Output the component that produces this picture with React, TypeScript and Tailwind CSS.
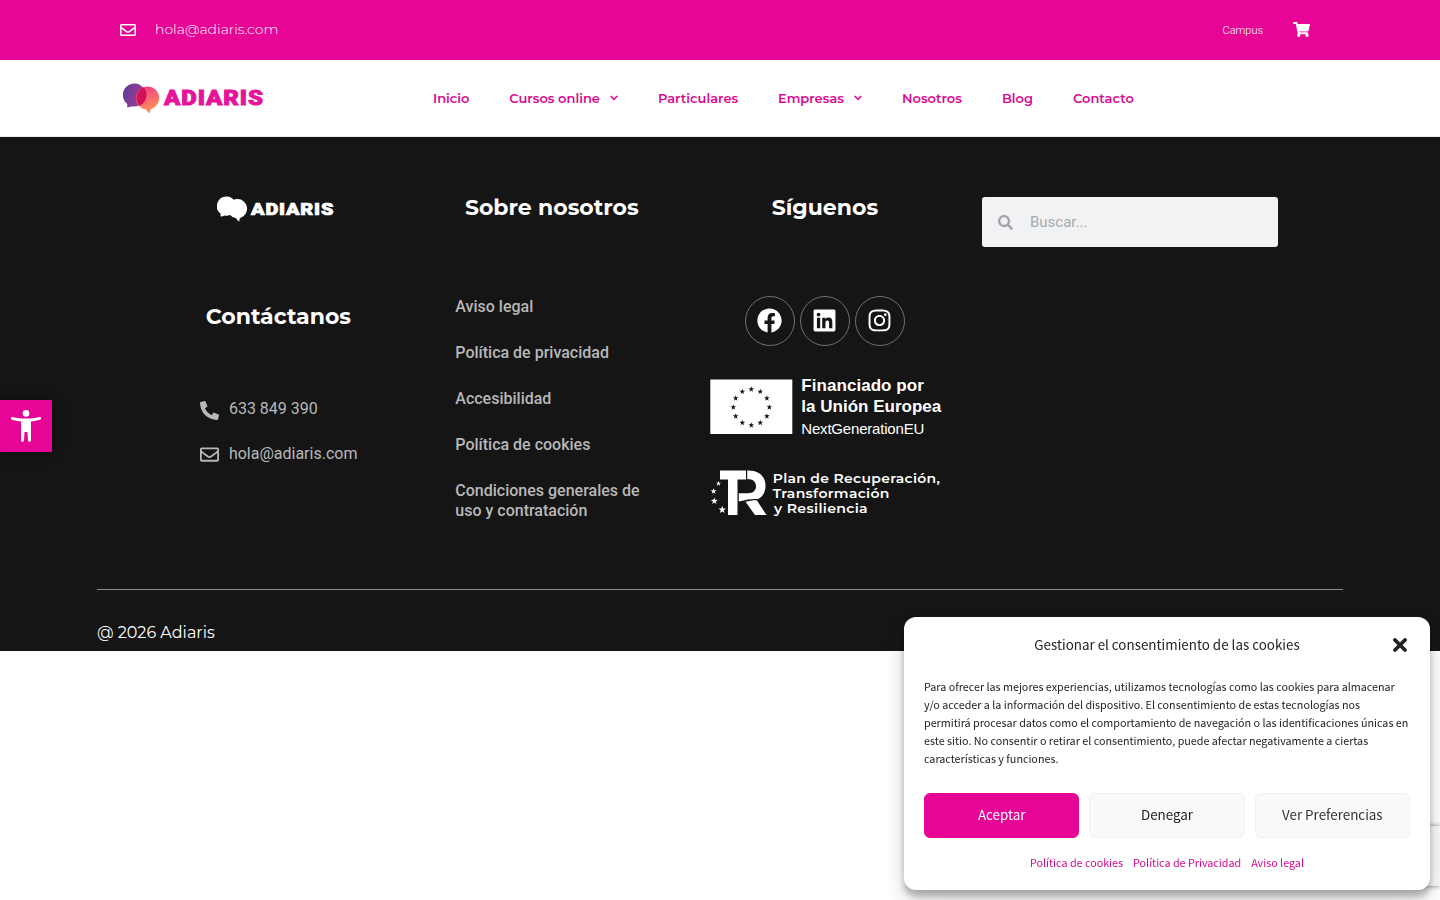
import { FaFacebook, FaInstagram, FaLinkedin, FaPhoneAlt, FaRegEnvelope, FaSearch, FaShoppingCart } from "react-icons/fa";

const NAV = [
  { label: "Inicio", width: "w-[36.3px]" },
  { label: "Cursos online", width: "w-[108.7px]", menu: true },
  { label: "Particulares", width: "w-[80px]" },
  { label: "Empresas", width: "w-[84px]", menu: true },
  { label: "Nosotros", width: "w-[60px]" },
  { label: "Blog", width: "w-[31px]" },
  { label: "Contacto", width: "w-[61px]" },
];

const LEGAL = [
  "Aviso legal",
  "Política de privacidad",
  "Accesibilidad",
  "Política de cookies",
  "Condiciones generales de uso y contratación",
];

const SOCIAL = [FaFacebook, FaLinkedin, FaInstagram];

function starPoints(cx: number, cy: number, r: number) {
  return Array.from({ length: 10 }, (_, i) => {
    const a = (Math.PI / 5) * i - Math.PI / 2;
    const d = i % 2 ? r * 0.4 : r;
    return `${(cx + d * Math.cos(a)).toFixed(2)},${(cy + d * Math.sin(a)).toFixed(2)}`;
  }).join(" ");
}

function Logo({ mono = false, className }: { mono?: boolean; className: string }) {
  return (
    <svg viewBox="0 0 142 32" className={className} role="img" aria-label="Adiaris">
      <defs>
        <linearGradient id="bubbleLeft" x1="0" y1="0" x2="1" y2="0.3">
          <stop offset="0" stopColor="#5b3f99" />
          <stop offset="1" stopColor="#a63a94" />
        </linearGradient>
        <linearGradient id="bubbleRight" x1="0.3" y1="0" x2="0.6" y2="1">
          <stop offset="0" stopColor="#ee3d8b" />
          <stop offset="1" stopColor="#ff9950" />
        </linearGradient>
        <clipPath id="overlap">
          <circle cx="12" cy="12" r="11.5" />
        </clipPath>
      </defs>
      <path
        d="M12 .5a11.5 11.5 0 1 1-3.2 22.7c-1.4 1-3.3 1.4-5 1 .6-.9.8-2.1.3-3.3A11.5 11.5 0 0 1 12 .5Z"
        fill={mono ? "#fff" : "url(#bubbleLeft)"}
      />
      <path
        d="M25 3.5a11.5 11.5 0 0 1 4 22.2c-1.5.6-2.3 1.8-2 4.8-1.5-1-3.4-2.2-4-4.1A11.5 11.5 0 0 1 25 3.5Z"
        fill={mono ? "#fff" : "url(#bubbleRight)"}
      />
      {!mono && <circle cx="25" cy="15" r="11.5" fill="#d0125c" clipPath="url(#overlap)" />}
      <text
        x="41"
        y="22.3"
        textLength="100"
        lengthAdjust="spacingAndGlyphs"
        className="font-['Roboto',sans-serif] text-[19.5px] font-black tracking-[0.8px]"
        fill={mono ? "#fff" : "#e5149a"}
        stroke={mono ? "#fff" : "#e5149a"}
        strokeWidth="0.9"
      >
        ADIARIS
      </text>
    </svg>
  );
}

function EuFunding() {
  return (
    <svg viewBox="0 0 236 56" className="h-[56px] w-[236px] overflow-visible">
      <rect x="0.3" y="0.5" width="82" height="54.5" fill="#fff" />
      {Array.from({ length: 12 }, (_, i) => {
        const a = (Math.PI / 6) * i;
        return (
          <polygon key={i} fill="#151515" points={starPoints(41.3 + 18 * Math.sin(a), 28.2 - 18 * Math.cos(a), 3)} />
        );
      })}
      <g fill="#fff" className="font-['Liberation_Sans',Arial,sans-serif]">
        <text x="91.3" y="12.4" textLength="122.5" className="text-[17px] font-bold">Financiado por</text>
        <text x="91.3" y="32.8" textLength="140" className="text-[17px] font-bold">la Unión Europea</text>
        <text x="91.3" y="55" textLength="123" className="text-[15px]">NextGenerationEU</text>
      </g>
    </svg>
  );
}

function RecoveryPlan() {
  return (
    <svg viewBox="0 0 236 48" className="h-[48px] w-[236px] overflow-visible">
      <g fill="#fff">
        <path d="M10 1.5h26v9h-8.5V46H18V10.5h-8Z" />
        <path d="M37.2 1.5h1.3c10.5 0 17 6 17 15.2 0 6.4-2.7 11-7.4 13.4-5-.6-10.5.1-19.3 2.3v-8.2h9.2c5.2 0 8-2.8 8-7 0-4.4-3-7.2-8.8-7.2Z" />
        <path d="M35.5 32.8c3.5-1 7.5-1.6 11.3-1.5L56.5 46H45Z" />
        <polygon points={starPoints(8.5, 14.5, 2.7)} />
        <polygon points={starPoints(3.6, 22.3, 3.1)} />
        <polygon points={starPoints(4.3, 32, 3.6)} />
        <polygon points={starPoints(12.2, 40.8, 4)} />
      </g>
      <g fill="#fff" className="font-['Montserrat',sans-serif] text-[13.5px] font-semibold tracking-[0.3px]">
        <text x="62.7" y="14.3" textLength="167.5" lengthAdjust="spacingAndGlyphs">Plan de Recuperación,</text>
        <text x="62.7" y="29.3" textLength="117" lengthAdjust="spacingAndGlyphs">Transformación</text>
        <text x="64" y="44.3" textLength="94" lengthAdjust="spacingAndGlyphs">y Resiliencia</text>
      </g>
    </svg>
  );
}

function Header() {
  return (
    <header>
      <div className="flex h-[60px] items-center justify-between bg-[#e60594] pl-[120px] pr-[130px] text-white">
        <a href="#" className="flex items-center">
          <FaRegEnvelope className="size-4" />
          <span className="mb-0.5 ml-[19px] font-['Montserrat',sans-serif] text-sm font-light leading-5">
            hola@adiaris.com
          </span>
        </a>
        <div className="flex items-center gap-[30px]">
          <a href="#" className="pt-0.5 font-['Roboto',sans-serif] text-[11px] font-light">Campus</a>
          <FaShoppingCart className="mb-0.5 h-[15px] w-[17px]" />
        </div>
      </div>
      <div className="flex h-[77px] items-center border-b border-[#eee] bg-white pt-px">
        <Logo className="ml-[122.6px] h-8 w-[142px]" />
        <nav className="ml-[168.4px] mt-px flex gap-10 font-['Montserrat',sans-serif] text-[13px] font-semibold text-[#d90b8f]">
          {NAV.map(({ label, width, menu }) => (
            <a key={label} href="#" className={`flex items-center justify-between whitespace-nowrap ${width}`}>
              {label}
              {menu && (
                <svg viewBox="0 0 8 6" className="mb-0.5 h-1.5 w-2" fill="none" stroke="currentColor" strokeWidth="1.6">
                  <path d="m.7 1 3.3 3.3L7.3 1" />
                </svg>
              )}
            </a>
          ))}
        </nav>
      </div>
    </header>
  );
}

function Footer() {
  const heading = "font-['Montserrat',sans-serif] text-[22px] font-bold leading-[22px] text-white";
  return (
    <footer className="h-[514px] bg-[#151515] px-[97px] pt-[59px]">
      <div className="ml-[43px] grid h-[393px] grid-cols-[276.8px_270px_276.2px_315px]">
        <div className="flex flex-col items-center">
          <Logo mono className="mr-1 h-[27px] w-[118px]" />
          <h2 className={`mt-[83px] ${heading}`}>Contáctanos</h2>
          <div className="mt-[69px] flex w-[157px] flex-col gap-[21px] font-['Roboto',sans-serif] text-base text-[#b8b8b8]">
            <a href="#" className="flex items-center gap-[10px] whitespace-nowrap">
              <FaPhoneAlt className="mt-0.5 size-[19px] shrink-0" />633 849 390
            </a>
            <a href="#" className="flex items-center gap-[10px] whitespace-nowrap">
              <FaRegEnvelope className="size-[19px] shrink-0" />hola@adiaris.com
            </a>
          </div>
        </div>
        <div className="flex flex-col items-center">
          <h2 className={`mt-px ${heading}`}>Sobre nosotros</h2>
          <ul className="mt-[78px] flex w-[193px] flex-col gap-[26px] font-['Roboto',sans-serif] text-base font-medium leading-5 text-[#b8b8b8]">
            {LEGAL.map((item) => (
              <li key={item}>
                <a href="#">{item}</a>
              </li>
            ))}
          </ul>
        </div>
        <div className="flex flex-col items-center">
          <h2 className={`mt-px ${heading}`}>Síguenos</h2>
          <div className="mt-[77px] flex gap-[5px] text-white">
            {SOCIAL.map((Icon, i) => (
              <a key={i} href="#" className="flex size-[50px] items-center justify-center rounded-full border border-[#69727d]">
                <Icon className="mb-px mr-px size-[25px]" />
              </a>
            ))}
          </div>
          <div className="mt-[33px] flex flex-col gap-[34px] pl-[6px]">
            <EuFunding />
            <RecoveryPlan />
          </div>
        </div>
        <div className="pl-[19px] pt-px">
          <label className="flex h-[50px] w-[296px] items-center rounded-[3px] bg-[#f1f2f4] pl-4 text-[#a3a5a8]">
            <FaSearch className="size-[15px]" />
            <input
              type="search"
              placeholder="Buscar..."
              className="ml-[17px] w-[220px] bg-transparent font-['Roboto',sans-serif] text-[15px] outline-none placeholder:text-[#a8aaad]"
            />
          </label>
        </div>
      </div>
      <div className="border-t border-[#8a8a8a] pt-[31px] font-['Montserrat',sans-serif] text-base leading-6 text-white">
        @ 2026 Adiaris
      </div>
    </footer>
  );
}

function CookieConsent() {
  const button = "h-[45px] rounded-md border pb-0.5 text-[13.4px]";
  return (
    <section className="fixed bottom-[10px] right-[10px] h-[273px] w-[526px] rounded-xl bg-white px-5 font-['Noto_Sans_CJK_SC',sans-serif] text-[#222] shadow-[0_10px_20px_rgba(0,0,0,0.19),0_6px_6px_rgba(0,0,0,0.23)]">
      <div className="relative flex h-[56px] items-center justify-center pb-0.5 text-[13.4px]">
        Gestionar el consentimiento de las cookies
        <button aria-label="Cerrar" className="absolute right-[3px] top-[21px]">
          <svg viewBox="0 0 14 14" className="size-[14px]" fill="none" stroke="#222" strokeWidth="3.8" strokeLinecap="round">
            <path d="m2 2 10 10M12 2 2 12" />
          </svg>
        </button>
      </div>
      <p className="mt-[5px] h-[90px] whitespace-nowrap text-[10.75px] leading-[18px]">
        Para ofrecer las mejores experiencias, utilizamos tecnologías como las cookies para almacenar
        <br />
        y/o acceder a la información del dispositivo. El consentimiento de estas tecnologías nos
        <br />
        permitirá procesar datos como el comportamiento de navegación o las identificaciones únicas en
        <br />
        este sitio. No consentir o retirar el consentimiento, puede afectar negativamente a ciertas
        <br />
        características y funciones.
      </p>
      <div className="mt-[25px] grid grid-cols-3 gap-[10px]">
        <button className={`${button} border-[#e60594] bg-[#e60594] text-white`}>Aceptar</button>
        <button className={`${button} border-[#f2f2f2] bg-[#f9f9f9]`}>Denegar</button>
        <button className={`${button} border-[#f2f2f2] bg-[#f9f9f9] text-[#333]`}>Ver Preferencias</button>
      </div>
      <div className="mt-4 flex justify-center gap-[10px] text-[10.75px] leading-[18px] text-[#d6088a]">
        <a href="#">Política de cookies</a>
        <a href="#">Política de Privacidad</a>
        <a href="#">Aviso legal</a>
      </div>
    </section>
  );
}

export default function App() {
  return (
    <div className="h-[900px] overflow-hidden bg-white">
      <Header />
      <Footer />
      <a
        href="#"
        aria-label="Accesibilidad"
        className="fixed left-0 top-[400px] flex size-[52px] items-center justify-center bg-[#e60594] shadow-[0_0_10px_rgba(0,0,0,0.5)]"
      >
        <svg viewBox="0 0 30 32" className="h-8 w-[30px]" fill="#fff">
          <circle cx="15" cy="3.4" r="3.3" />
          <path d="M1.6 7C6 8.2 10.5 8.5 15 8.5s9-.3 13.4-1.5c1.7-.4 2.3 2.3.7 2.8-3 .8-6 1.3-9.1 1.6v19c0 1.7-2.9 1.7-3 0l-.5-8.4h-3l-.5 8.4c-.1 1.700-3 1.700-3 0v-19C6.900 11.100 3.900 10.600.9 9.800-.7 9.300-.1 6.600 1.600 7Z" />
        </svg>
      </a>
      <div className="fixed bottom-[14px] right-0 h-[60px] w-[70px] bg-[#f9f9f9] shadow-[0_0_5px_gray]" />
      <CookieConsent />
    </div>
  );
}
